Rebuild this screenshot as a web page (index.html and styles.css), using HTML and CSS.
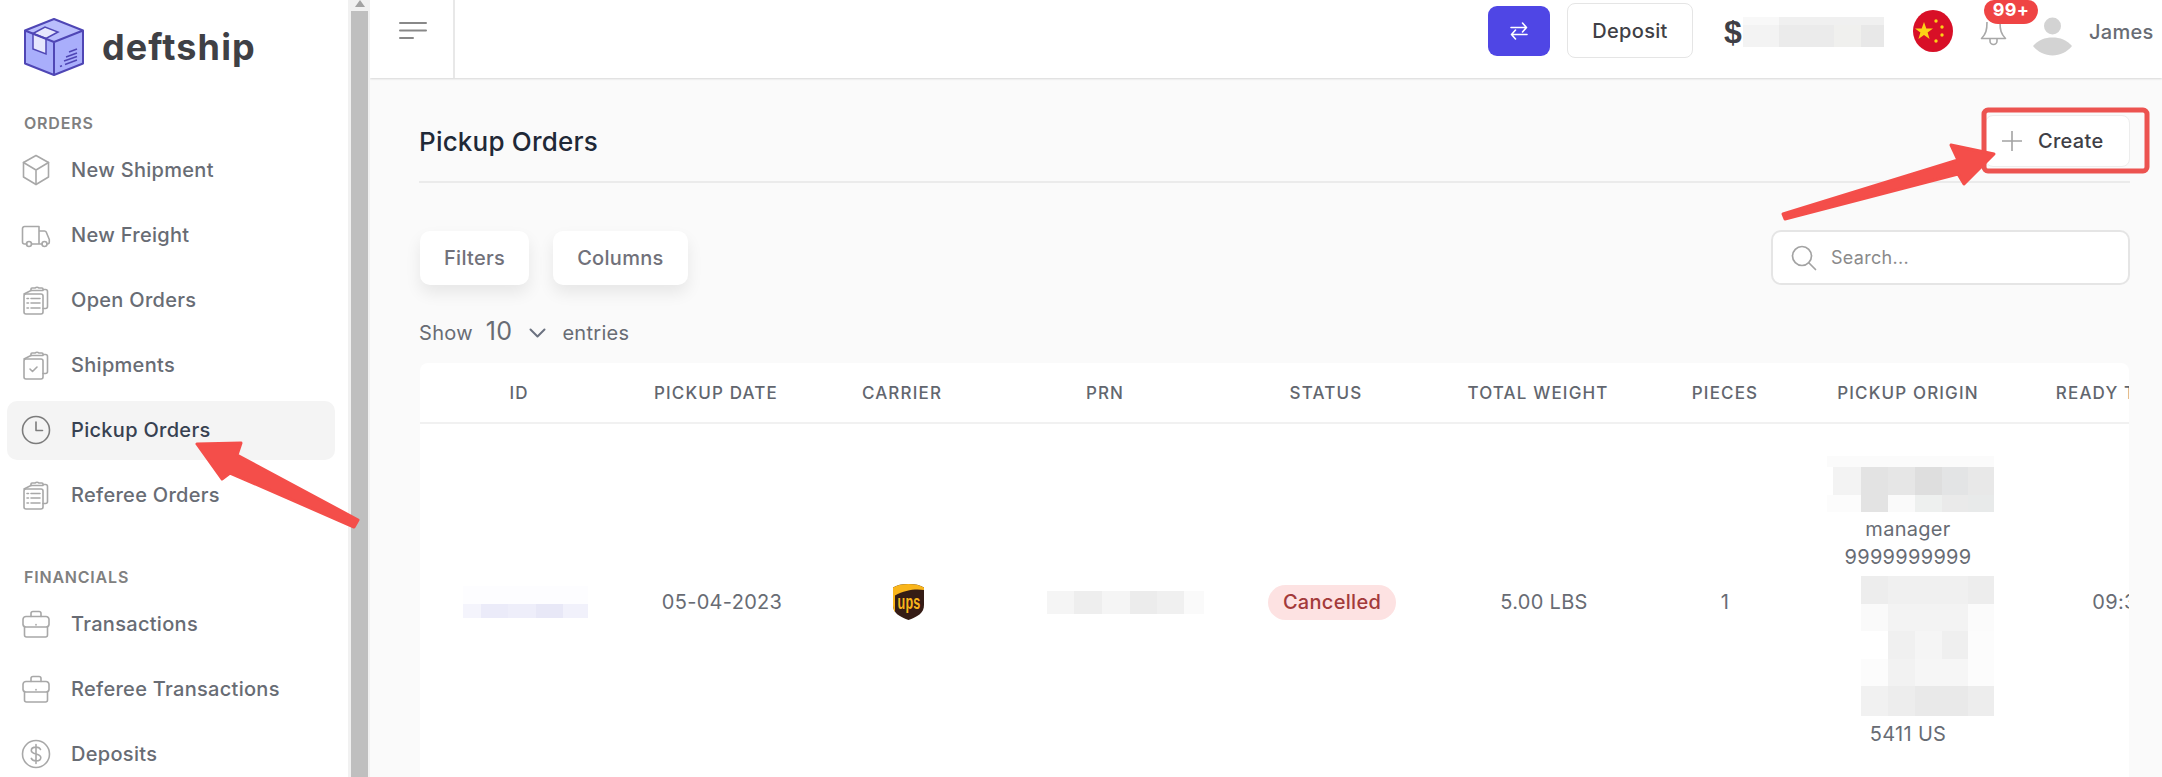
FILE: index.html
```html
<!DOCTYPE html>
<html lang="en">
<head>
<meta charset="utf-8">
<title>Pickup Orders</title>
<link rel="stylesheet" href="styles.css">
</head>
<body>
<svg class="sprites" width="0" height="0" aria-hidden="true">
  <symbol id="i-box" viewBox="0 0 30 32"><path d="M15 1.500 27.500 8.500v14.500L15 30.500 2.500 23V8.500Z"/><path d="M2.500 8.500 15 16l12.500-7.500M15 16v14.500"/></symbol>
  <symbol id="i-truck" viewBox="0 0 30 32"><path d="M6 25H3.500A2 2 0 0 1 1.500 23V9.500a2 2 0 0 1 2-2H18v17.500H10.500M18 12h5.500c.8 0 1.400.4 1.800 1.200l3 7.300V23a2 2 0 0 1-2 2M18 25h3"/><circle cx="8" cy="25" r="2.500"/><circle cx="23.500" cy="25" r="2.500"/></symbol>
  <symbol id="i-clip" viewBox="0 0 30 32"><path d="M10 6.500V5a1 1 0 0 1 1-1h3a3 2.400 0 0 1 4 0h3a1 1 0 0 1 1 1v1.500H10ZM22 5.500h2.500a2 2 0 0 1 2 2v15a2 2 0 0 1-2 2H22"/><rect x="3" y="10" width="19" height="20" rx="2"/><path d="M3 10 10 6.500"/><path d="M10 14.500h9M10 19h9M10 24h9M6 14.500h1.500M6 19h1.500M6 24h1.500"/></symbol>
  <symbol id="i-clipcheck" viewBox="0 0 30 32"><path d="M10 6.500V5a1 1 0 0 1 1-1h3a3 2.400 0 0 1 4 0h3a1 1 0 0 1 1 1v1.500H10ZM22 5.500h2.500a2 2 0 0 1 2 2v15a2 2 0 0 1-2 2H22"/><rect x="3" y="10" width="19" height="20" rx="2"/><path d="M3 10 10 6.500"/><path d="m9 20 2.500 2.500L16 18"/></symbol>
  <symbol id="i-clock" viewBox="0 0 30 32"><circle cx="15" cy="16" r="13.500"/><path d="M15 8v8.500h6.500"/></symbol>
  <symbol id="i-case" viewBox="0 0 30 32"><path d="M10 8.500V5.500a2 2 0 0 1 2-2h6a2 2 0 0 1 2 2v3"/><path d="M5 8.500h20a3 3 0 0 1 3 3v5a3 3 0 0 1-3 2.500H5a3 3 0 0 1-3-2.500v-5a3 3 0 0 1 3-3Z"/><path d="M3.500 18.500V27a2 2 0 0 0 2 2h19a2 2 0 0 0 2-2v-8.500"/><path d="M15 16.500v.5"/></symbol>
  <symbol id="i-dollar" viewBox="0 0 30 32"><circle cx="15" cy="16" r="13.500"/><path d="M19.500 11.500c-.6-1.500-2.300-2.400-4.500-2.400-2.700 0-4.700 1.300-4.700 3.400 0 4.700 9.500 2.300 9.500 7 0 2.100-2 3.400-4.800 3.400-2.300 0-4-.9-4.700-2.500M15 6.500v19"/></symbol>
</svg>

<div class="page">
  <aside class="sidebar">
    <div class="brand">
      <svg class="brand-mark" viewBox="0 0 60 58" width="60" height="58">
        <path d="M30 1 59 12.500v33L30 57 1 45.500v-33Z" fill="#a9aefb"/>
        <path d="M30 1 59 12.500 30 24 1 12.500Z" fill="#b9bdfc"/>
        <path d="M9 15.500 9 31l13 5V20.500Z" fill="#e6e7fd" stroke="#4f46b5" stroke-width="1.500"/>
        <path d="M9 15.500 21 9l13 5-12 6.500Z" fill="#e6e7fd" stroke="#4f46b5" stroke-width="1.500"/>
        <path d="M30 1 59 12.500v33L30 57 1 45.500v-33ZM1 12.500 30 24 59 12.500M30 24v33" fill="none" stroke="#4f46b5" stroke-width="2" stroke-linejoin="round"/>
        <path d="M45 34l8-3M42 39l11-4M40 43l13-4.500M36 48.500l2-.8M41 46.500l12-4.500" stroke="#4f46b5" stroke-width="1.500" fill="none"/>
      </svg>
      <span class="brand-name">deftship</span>
    </div>

    <section class="nav-group">
      <h2 class="nav-label">ORDERS</h2>
      <a class="nav-item"><svg class="nav-icon"><use href="#i-box"/></svg>New Shipment</a>
      <a class="nav-item"><svg class="nav-icon"><use href="#i-truck"/></svg>New Freight</a>
      <a class="nav-item"><svg class="nav-icon"><use href="#i-clip"/></svg>Open Orders</a>
      <a class="nav-item"><svg class="nav-icon"><use href="#i-clipcheck"/></svg>Shipments</a>
      <a class="nav-item is-active"><svg class="nav-icon"><use href="#i-clock"/></svg>Pickup Orders</a>
      <a class="nav-item"><svg class="nav-icon"><use href="#i-clip"/></svg>Referee Orders</a>
    </section>

    <section class="nav-group">
      <h2 class="nav-label">FINANCIALS</h2>
      <a class="nav-item"><svg class="nav-icon"><use href="#i-case"/></svg>Transactions</a>
      <a class="nav-item"><svg class="nav-icon"><use href="#i-case"/></svg>Referee Transactions</a>
      <a class="nav-item"><svg class="nav-icon"><use href="#i-dollar"/></svg>Deposits</a>
    </section>
  </aside>

  <div class="scrollbar"><div class="scroll-arrow"></div><div class="scroll-thumb"></div></div>

  <div class="main">
    <header class="topbar">
      <button class="menu-btn" aria-label="Menu">
        <svg class="menu-icon" width="28" height="18" viewBox="0 0 28 18"><path d="M1 1h26M1 8.500h26M1 16h13" stroke="#888" stroke-width="2" fill="none" stroke-linecap="round"/></svg>
      </button>
      <div class="top-right">
        <button class="swap-btn" aria-label="Switch">
          <svg width="22" height="24" viewBox="0 0 22 24" fill="none" stroke="#fff" stroke-width="1.600" stroke-linecap="round" stroke-linejoin="round"><path d="M3 8.500h15.500M14.500 4l4 4.500-4 4.500M19 15.500H3.500M7.500 11l-4 4.500 4 4.500"/></svg>
        </button>
        <button class="deposit-btn">Deposit</button>
        <div class="balance"><span class="dollar">$</span>
          <svg class="balance-blur" width="141" height="30" viewBox="0 0 141 30"><rect width="141" height="30" fill="#f0f0f0"/><rect width="36" height="8" fill="#f8f8f8"/><rect x="0" y="8" width="36" height="22" fill="#f3f3f3"/><rect x="36" y="8" width="55" height="22" fill="#ebebeb"/><rect x="91" y="8" width="27" height="22" fill="#f0f0ee"/><rect x="118" y="8" width="23" height="22" fill="#e8e8e8"/></svg>
        </div>
        <svg class="flag" width="40" height="42" viewBox="0 0 40 42">
          <ellipse cx="20" cy="21" rx="20" ry="21" fill="#d80f27"/>
          <path d="M11 12l2.300 6.500H20l-5.400 4 2 6.500-5.600-4-5.600 4 2-6.500-5.400-4h6.700Z" fill="#fcd116"/>
          <circle cx="23" cy="11" r="1.700" fill="#fcd116"/><circle cx="29" cy="17" r="1.700" fill="#fcd116"/><circle cx="29" cy="25" r="1.700" fill="#fcd116"/><circle cx="23" cy="31" r="1.700" fill="#fcd116"/>
        </svg>
        <div class="bell">
          <svg width="27" height="26" viewBox="0 0 27 26" fill="none" stroke="#a8a8a8" stroke-width="1.600" stroke-linejoin="round"><path d="M7 2c0 8-1 12-5.500 16.500h24C21 14 20 10 20 2"/><path d="M10 18.500v2.500a3.500 3.500 0 0 0 7 0v-2.500"/></svg>
          <span class="badge">99+</span>
        </div>
        <svg class="avatar" width="39" height="39" viewBox="0 0 39 39"><circle cx="19.500" cy="9" r="8.500" fill="#d3d3d3"/><path d="M0 29C5 23 12 20.500 19.500 20.500S34 23 39 29C34 35 27 38.500 19.500 38.500S5 35 0 29Z" fill="#d3d3d3"/></svg>
        <span class="user-name">James</span>
      </div>
    </header>

    <main class="content">
      <div class="page-head">
        <h1 class="page-title">Pickup Orders</h1>
        <button class="create-btn"><svg width="20" height="20" viewBox="0 0 20 20"><path d="M10 0v20M0 10h20" stroke="#a3a3a3" stroke-width="1.600"/></svg>Create</button>
      </div>

      <div class="toolbar">
        <button class="tool-btn">Filters</button>
        <button class="tool-btn">Columns</button>
        <label class="search">
          <svg width="26" height="26" viewBox="0 0 26 26" fill="none" stroke="#a3a3a3" stroke-width="1.700" stroke-linecap="round"><circle cx="11" cy="11" r="9.500"/><path d="m18 18 6.500 6.500"/></svg>
          <span class="search-text">Search...</span>
        </label>
      </div>

      <div class="entries">
        <span>Show</span>
        <span class="entries-num">10</span>
        <svg width="17" height="10" viewBox="0 0 17 10" fill="none" stroke="#6b7280" stroke-width="2" stroke-linecap="round" stroke-linejoin="round"><path d="m1.500 1.500 7 7 7-7"/></svg>
        <span>entries</span>
      </div>

      <div class="table-card">
        <table class="orders">
          <colgroup>
            <col class="c-id"><col class="c-date"><col class="c-carrier"><col class="c-prn"><col class="c-status"><col class="c-weight"><col class="c-pieces"><col class="c-origin"><col class="c-ready">
          </colgroup>
          <thead>
            <tr><th>ID</th><th>PICKUP DATE</th><th>CARRIER</th><th>PRN</th><th>STATUS</th><th>TOTAL WEIGHT</th><th>PIECES</th><th>PICKUP ORIGIN</th><th>READY TIME</th></tr>
          </thead>
          <tbody>
            <tr>
              <td class="cell-shift"><svg class="blur" width="125" height="32" viewBox="0 0 125 32"><rect width="125" height="18" fill="#fdfdff"/><rect y="18" width="18" height="14" fill="#f4f4fc"/><rect x="18" y="18" width="27" height="14" fill="#ebebf9"/><rect x="45" y="18" width="28" height="14" fill="#eeeefa"/><rect x="73" y="18" width="27" height="14" fill="#e8e8f7"/><rect x="100" y="18" width="25" height="14" fill="#f1f1fb"/></svg></td>
              <td class="cell-shift">05-04-2023</td>
              <td class="cell-shift">
                <svg class="ups" width="31" height="36" viewBox="0 0 31 36">
                  <path d="M15.500 0C9 0 4 1 0 3.500V21c0 8 6 11.500 15.500 15C25 32.500 31 29 31 21V3.500C27 1 22 0 15.500 0Z" fill="#351c15"/>
                  <path d="M0 3.500C4 1 9 0 15.500 0S27 1 31 3.500V6C24 4.500 12 5.500 2 11.500V28C.5 26 0 23.500 0 21Z" fill="#f9b51b"/>
                  <text class="ups-text" x="4.500" y="25" textLength="23" lengthAdjust="spacingAndGlyphs">ups</text>
                </svg>
              </td>
              <td class="cell-prn"><svg class="blur" width="157" height="23" viewBox="0 0 157 23"><rect width="157" height="23" fill="#f5f5f5"/><rect x="27" width="28" height="23" fill="#eeeeee"/><rect x="83" width="27" height="23" fill="#ececec"/><rect x="110" y="0" width="27" height="23" fill="#f0f0f0"/><rect x="137" width="20" height="23" fill="#fafafa"/></svg></td>
              <td class="cell-shift"><span class="pill">Cancelled</span></td>
              <td class="cell-shift">5.00 LBS</td>
              <td>1</td>
              <td class="origin">
                <svg class="blur-block" width="167" height="56" viewBox="0 0 167 56"><rect width="167" height="11" fill="#fbfbfb"/><rect x="6" y="11" width="28" height="28" fill="#f3f3f3"/><rect x="34" y="11" width="27" height="45" fill="#e3e3e3"/><rect x="61" y="11" width="27" height="28" fill="#e6e6e6"/><rect x="88" y="11" width="27" height="28" fill="#dedede"/><rect x="115" y="11" width="26" height="28" fill="#e3e4e5"/><rect x="141" y="11" width="26" height="28" fill="#e8e8e8"/><rect y="39" width="34" height="17" fill="#fcfcfc"/><rect x="61" y="39" width="27" height="17" fill="#fafafa"/><rect x="88" y="39" width="27" height="17" fill="#eef0ef"/><rect x="115" y="39" width="26" height="17" fill="#eaeaea"/><rect x="141" y="39" width="26" height="17" fill="#e8eaea"/></svg>
                <div class="origin-line">manager</div>
                <div class="origin-line">9999999999</div>
                <svg class="blur-block block-two" width="167" height="140" viewBox="0 0 167 140"><rect x="34" width="27" height="28" fill="#ededed"/><rect x="61" width="80" height="28" fill="#f0f0f0"/><rect x="141" width="26" height="28" fill="#ededed"/><rect x="34" y="28" width="27" height="27" fill="#fafafa"/><rect x="61" y="28" width="80" height="27" fill="#f3f3f3"/><rect x="141" y="28" width="26" height="27" fill="#fbfbfb"/><rect x="61" y="55" width="27" height="28" fill="#f0f0f0"/><rect x="88" y="55" width="27" height="28" fill="#f5f5f5"/><rect x="115" y="55" width="26" height="28" fill="#efefef"/><rect x="141" y="55" width="26" height="28" fill="#fcfcfc"/><rect x="34" y="83" width="27" height="27" fill="#fcfcfc"/><rect x="61" y="83" width="27" height="27" fill="#f2f2f2"/><rect x="88" y="83" width="53" height="27" fill="#f6f6f6"/><rect x="141" y="83" width="26" height="27" fill="#fcfcfc"/><rect x="34" y="110" width="27" height="30" fill="#f1f1f1"/><rect x="61" y="110" width="27" height="30" fill="#ededed"/><rect x="88" y="110" width="53" height="30" fill="#e9e9e9"/><rect x="141" y="110" width="26" height="30" fill="#ededed"/></svg>
                <div class="origin-line">5411 US</div>
              </td>
              <td class="cell-ready">09:30</td>
            </tr>
          </tbody>
        </table>
      </div>
    </main>
  </div>

  <svg class="annotations" width="2162" height="777" viewBox="0 0 2162 777" aria-hidden="true">
    <rect class="anno-box" x="1984" y="110" width="163" height="61" rx="4"/>
    <path class="anno-arrow" d="M197 444 241 443 237 455 358 520 354 527 230 473 222 479Z"/>
    <path class="anno-arrow" d="M1994 154 1951 145 1958 160 1783 214 1785 219 1958 174 1964 184Z"/>
  </svg>
</div>
</body>
</html>
```

FILE: styles.css
```css
* { box-sizing: border-box; }

html, body {
  margin: 0;
  height: 100%;
  overflow: hidden;
}

body {
  font-family: Inter, "Liberation Sans", sans-serif;
  letter-spacing: .3px;
  color: #686c74;
  background: #fff;
}

button {
  font: inherit;
  letter-spacing: inherit;
  cursor: pointer;
}

.sprites { display: block; height: 0; }

.page {
  position: relative;
  display: flex;
  width: 2162px;
  height: 777px;
  overflow: hidden;
}

/* Sidebar */
.sidebar {
  flex: 0 0 348px;
  height: 777px;
  overflow: hidden;
  background: #fff;
}

.brand {
  display: flex;
  align-items: center;
  gap: 18px;
  height: 111px;
  padding: 0 0 17px 24px;
}

.brand-mark { flex: none; }

.brand-name {
  font-size: 36px;
  font-weight: 700;
  color: #3f4045;
  letter-spacing: 1.100px;
}

.nav-group { margin-bottom: 40px; }

.nav-label {
  margin: 0 0 6px;
  padding-left: 24px;
  font-size: 16px;
  line-height: 24px;
  font-weight: 600;
  letter-spacing: .8px;
  color: #808080;
}

.nav-item {
  display: flex;
  align-items: center;
  gap: 20px;
  width: 328px;
  height: 59px;
  margin: 0 0 6px 7px;
  padding: 0 0 2px 14px;
  border-radius: 10px;
  font-size: 20px;
  font-weight: 500;
  color: #686c74;
}

.nav-icon {
  flex: none;
  width: 30px;
  height: 32px;
  fill: none;
  stroke: #a8a8a8;
  stroke-width: 1.600;
  stroke-linecap: round;
  stroke-linejoin: round;
}

.nav-item.is-active {
  background: #f4f4f4;
  color: #374151;
}

.nav-item.is-active .nav-icon { stroke: #7c7c7c; }

/* Scrollbar */
.scrollbar {
  position: relative;
  flex: 0 0 22px;
  height: 777px;
  padding: 0 2px 0 3px;
  background: #f1f1f1;
}

.scroll-arrow {
  width: 0;
  height: 0;
  margin: 0 auto;
  border: 5px solid transparent;
  border-top: 0;
  border-bottom: 7px solid #a3a3a3;
}

.scroll-thumb {
  height: 766px;
  margin-top: 4px;
  background: #bfbfbf;
}

/* Main */
.main {
  flex: 1;
  min-width: 0;
  display: flex;
  flex-direction: column;
  background: #fafafa;
}

.topbar {
  flex: none;
  display: flex;
  align-items: stretch;
  height: 78px;
  background: #fff;
  box-shadow: 0 1px 2px rgba(0, 0, 0, .14);
}

.menu-btn {
  width: 85px;
  padding: 0 0 17px 29px;
  border: 0;
  border-right: 2px solid #e8e8e8;
  background: none;
  text-align: left;
}

.menu-icon { display: block; }

.top-right {
  flex: 1;
  display: flex;
  align-items: center;
  justify-content: flex-end;
  padding-right: 9px;
}

.swap-btn {
  display: flex;
  align-items: center;
  justify-content: center;
  width: 62px;
  height: 50px;
  margin: -16px 17px 0 0;
  padding: 0;
  border: 0;
  border-radius: 9px;
  background: #4f46e5;
}

.deposit-btn {
  width: 126px;
  height: 55px;
  margin: -17px 31px 0 0;
  padding: 0;
  border: 1px solid #e5e5e5;
  border-radius: 8px;
  background: #fff;
  font-size: 20px;
  font-weight: 500;
  color: #3f3f46;
}

.balance {
  display: flex;
  align-items: center;
  gap: 2px;
  margin: -14px 29px 0 0;
}

.dollar {
  width: 17px;
  font-family: "Liberation Sans", sans-serif;
  font-size: 32px;
  font-weight: 700;
  color: #3f3f46;
}

.balance-blur { display: block; }

.flag {
  margin: -16px 27px 0 0;
}

.bell {
  position: relative;
  width: 27px;
  height: 26px;
  margin: -12px 26px 0 0;
}

.bell svg { display: block; }

.badge {
  position: absolute;
  top: -20px;
  left: 4px;
  width: 54px;
  height: 24px;
  border-radius: 10px 10px 14px 14px;
  background: #ef4444;
  color: #fff;
  font-size: 18px;
  line-height: 20px;
  font-weight: 700;
  text-align: center;
}

.avatar {
  margin: -6px 17px 0 0;
}

.user-name {
  width: 64px;
  margin-top: -14px;
  font-size: 20px;
  font-weight: 500;
  color: #686c74;
  white-space: nowrap;
}

/* Content */
.content {
  flex: 1;
  min-height: 0;
  padding: 37px 32px 0 49px;
}

.page-head {
  display: flex;
  align-items: center;
  justify-content: space-between;
  padding-bottom: 14px;
  border-bottom: 2px solid #ebebeb;
}

.page-title {
  margin: 0;
  font-size: 26px;
  font-weight: 500;
  letter-spacing: .2px;
  color: #1f2937;
}

.create-btn {
  display: flex;
  align-items: center;
  gap: 16px;
  width: 145px;
  height: 52px;
  padding: 0 0 0 16px;
  border: 1px solid #ededed;
  border-radius: 8px;
  background: #fff;
  font-size: 20px;
  font-weight: 500;
  color: #3f3f46;
}

.toolbar {
  display: flex;
  align-items: center;
  gap: 24px;
  margin: 47px 0 0 1px;
}

.tool-btn {
  height: 54px;
  padding: 0 24px;
  border: 0;
  border-radius: 10px;
  background: #fff;
  box-shadow: 0 8px 16px rgba(0, 0, 0, .08);
  font-size: 20px;
  font-weight: 500;
  color: #71717a;
}

.search {
  display: flex;
  align-items: center;
  gap: 14px;
  width: 359px;
  height: 55px;
  margin-left: auto;
  padding-left: 18px;
  border: 2px solid #e5e5e5;
  border-radius: 10px;
  background: #fff;
}

.search-text {
  font-size: 18px;
  color: #8a8a8a;
}

.entries {
  display: flex;
  align-items: center;
  height: 30px;
  margin-top: 33px;
  font-size: 20px;
  color: #686c74;
}

.entries-num {
  margin: -4px 17px 0 13px;
  font-size: 25px;
}

.entries svg { margin-right: 16px; }

.table-card {
  width: 1709px;
  height: 420px;
  margin: 15px 0 0 1px;
  border-radius: 8px 8px 0 0;
  background: #fff;
  overflow: hidden;
}

.orders {
  width: 1796px;
  table-layout: fixed;
  border-collapse: collapse;
  text-align: center;
}

.c-id { width: 198px; }
.c-date { width: 196px; }
.c-carrier { width: 176px; }
.c-prn { width: 230px; }
.c-status { width: 212px; }
.c-weight { width: 212px; }
.c-pieces { width: 162px; }
.c-origin { width: 204px; }
.c-ready { width: 206px; }

.orders th {
  height: 60px;
  padding: 0;
  border-bottom: 2px solid #f1f1f1;
  font-size: 17px;
  font-weight: 500;
  letter-spacing: 1.150px;
  color: #62666e;
  white-space: nowrap;
}

.orders td {
  padding: 32px 0;
  font-size: 20px;
  line-height: 28px;
  color: #686c74;
  vertical-align: middle;
}

.orders td.cell-shift { padding-left: 12px; }
.orders td.cell-prn { padding-left: 40px; }
.orders td.cell-ready { padding-left: 16px; }

.blur {
  display: block;
  margin: 0 auto;
}

.ups {
  display: block;
  margin: 0 auto;
  overflow: visible;
}

.ups-text {
  font-family: "Liberation Sans", sans-serif;
  font-size: 20px;
  font-weight: 700;
  fill: #f9b51b;
}

.pill {
  display: inline-block;
  width: 128px;
  height: 35px;
  border-radius: 18px;
  background: #fde2e2;
  color: #a33a3a;
  font-weight: 500;
  line-height: 35px;
}

.origin-line {
  height: 28px;
  white-space: nowrap;
}

.blur-block {
  display: block;
  margin: 0 auto 3px;
  transform: translateX(2px);
}

.block-two { margin: 5px auto 4px; }

/* Annotation overlay */
.annotations {
  position: absolute;
  left: 0;
  top: 0;
  pointer-events: none;
}

.anno-box {
  fill: none;
  stroke: #ec5350;
  stroke-width: 5;
}

.anno-arrow {
  fill: #f44e4a;
  stroke: #f44e4a;
  stroke-width: 3;
  stroke-linejoin: round;
}
```
